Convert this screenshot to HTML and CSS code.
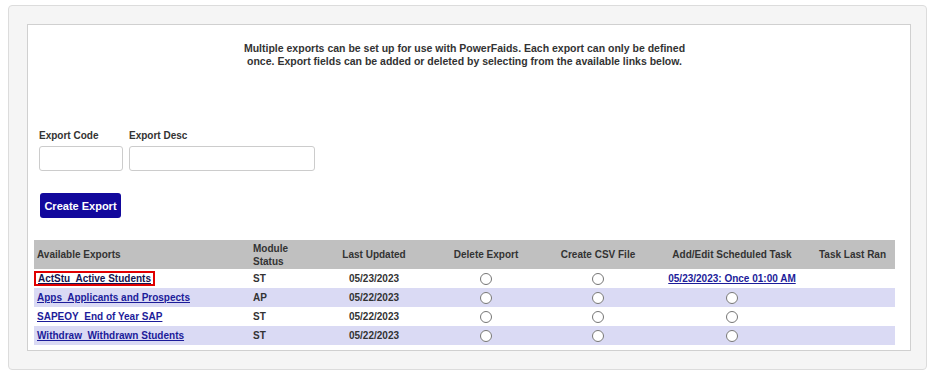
FILE: index.html
```html
<!DOCTYPE html>
<html lang="en">
<head>
  <meta charset="UTF-8" />
  <title>Exports</title>
  <link rel="stylesheet" href="styles.css">
</head>

<body>
  <div class="panel">
    <div class="content">
      <p class="intro">
        Multiple exports can be set up for use with PowerFaids. Each export can only be defined
        once. Export fields can be added or deleted by selecting from the available links below.
      </p>

      <div class="new-export">
        <div class="field">
          <label for="exportCode">Export Code</label>
          <input type="text" id="exportCode" class="code-input">
        </div>
        <div class="field">
          <label for="exportDesc">Export Desc</label>
          <input type="text" id="exportDesc" class="desc-input">
        </div>
      </div>

      <button class="create-btn">Create Export</button>

      <table class="exports">
        <colgroup>
          <col style="width: 216px">
          <col style="width: 68px">
          <col style="width: 112px">
          <col style="width: 112px">
          <col style="width: 112px">
          <col style="width: 156px">
          <col style="width: 85px">
        </colgroup>
        <thead>
          <tr>
            <th class="left">Available Exports</th>
            <th class="left">Module<br>Status</th>
            <th>Last Updated</th>
            <th>Delete Export</th>
            <th>Create CSV File</th>
            <th>Add/Edit Scheduled Task</th>
            <th>Task Last Ran</th>
          </tr>
        </thead>
        <tbody>
          <tr>
            <td class="left"><a href="#" class="export-link selected">ActStu&nbsp; Active Students</a></td>
            <td class="left">ST</td>
            <td>05/23/2023</td>
            <td><input type="radio" name="del1"></td>
            <td><input type="radio" name="csv1"></td>
            <td><a href="#" class="task-link">05/23/2023: Once 01:00 AM</a></td>
            <td></td>
          </tr>
          <tr>
            <td class="left"><a href="#" class="export-link">Apps&nbsp; Applicants and Prospects</a></td>
            <td class="left">AP</td>
            <td>05/22/2023</td>
            <td><input type="radio" name="del2"></td>
            <td><input type="radio" name="csv2"></td>
            <td><input type="radio" name="task2"></td>
            <td></td>
          </tr>
          <tr>
            <td class="left"><a href="#" class="export-link">SAPEOY&nbsp; End of Year SAP</a></td>
            <td class="left">ST</td>
            <td>05/22/2023</td>
            <td><input type="radio" name="del3"></td>
            <td><input type="radio" name="csv3"></td>
            <td><input type="radio" name="task3"></td>
            <td></td>
          </tr>
          <tr>
            <td class="left"><a href="#" class="export-link">Withdraw&nbsp; Withdrawn Students</a></td>
            <td class="left">ST</td>
            <td>05/22/2023</td>
            <td><input type="radio" name="del4"></td>
            <td><input type="radio" name="csv4"></td>
            <td><input type="radio" name="task4"></td>
            <td></td>
          </tr>
        </tbody>
      </table>
    </div>
  </div>
</body>
</html>
```

FILE: styles.css
```css
body {
  margin: 5px 9px 10px 8px;
  background: white;
  font-family: 'Liberation Sans', Arial, sans-serif;
  color: #333;
}

/* grey outer panel */
.panel {
  background-color: #f5f5f5;
  border: 1px solid #dcdcdc;
  border-radius: 4px;
  padding: 18px 15px 18px 18px;
}

/* white inner box */
.content {
  background-color: white;
  border: 1px solid #d0d0d0;
  padding: 17px 15px 5px 6px;
}

.intro {
  width: 460px;
  margin: 0 auto;
  text-align: center;
  font-size: 10.5px;
  font-weight: 700;
  line-height: 13px;
}

/* new export form */
.new-export {
  display: flex;
  gap: 6px;
  margin-top: 61px;
  padding-left: 5px;
}

.field {
  display: flex;
  flex-direction: column;
  gap: 4px;
}

.field label {
  font-size: 10px;
  font-weight: 700;
  line-height: 13px;
}

.field input {
  height: 25px;
  box-sizing: border-box;
  border: 1px solid #ccc;
  border-radius: 3px;
  margin: 0;
}

.code-input {
  width: 84px;
}

.desc-input {
  width: 186px;
}

.create-btn {
  display: block;
  margin: 22px 0 0 6px;
  width: 81px;
  height: 25px;
  background-color: #12089c;
  color: white;
  border: none;
  border-radius: 3px;
  font-family: inherit;
  font-size: 11px;
  font-weight: 700;
  padding: 0;
  cursor: pointer;
}

/* exports table */
.exports {
  width: 861px;
  margin-top: 22px;
  border-collapse: collapse;
  table-layout: fixed;
  font-size: 10px;
  font-weight: 700;
}

.exports th {
  background-color: #c0c0c0;
  height: 29px;
  padding: 0 3px;
  line-height: 13px;
  text-align: center;
  vertical-align: middle;
}

.exports td {
  height: 19px;
  padding: 0 3px;
  text-align: center;
  vertical-align: middle;
  line-height: 13px;
}

.exports th.left,
.exports td.left {
  text-align: left;
}

.exports tbody tr:nth-child(even) {
  background-color: #dadaf4;
}

.exports input[type="radio"] {
  margin: 0;
  width: 12px;
  height: 12px;
  vertical-align: middle;
}

.export-link,
.task-link {
  color: #1c1c9a;
  text-decoration: underline;
}

.export-link.selected {
  color: #141450;
  border: 2px solid #e00000;
  padding: 0 2px;
  margin-left: -3px;
}
```
